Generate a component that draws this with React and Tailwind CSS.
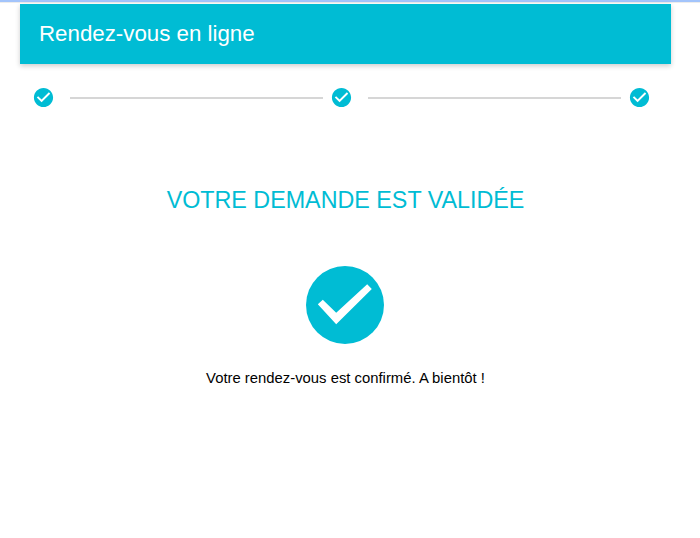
import React from 'react';

const StepIcon = () => (
  <svg viewBox="0 0 24 24" className="w-[23px] h-[23px] shrink-0 text-[#00bcd4]" fill="currentColor">
    <path d="M12 2C6.48 2 2 6.48 2 12s4.48 10 10 10 10-4.48 10-10S17.52 2 12 2zm-2 15l-5-5 1.41-1.41L10 14.17l7.59-7.59L19 8l-9 9z" />
  </svg>
);

const StepLine = () => <div className="flex-1 h-[2px] bg-[#d6d6d6] ml-[15px] mr-[7px]" />;

const App = () => {
  return (
    <div className="w-[700px] h-[538px] bg-white overflow-hidden font-['Liberation_Sans',Arial,sans-serif]">
      <div className="h-[2px] bg-[#a3c4fb]" />
      <div className="h-px bg-[#ececec]" />
      <div className="ml-[20px] mr-[29px] mt-[1px] h-[60px] bg-[#00bcd4] flex items-center pl-[19px] shadow-[0_2px_5px_rgba(0,0,0,0.2)]">
        <h1 className="text-white text-[22.3px] leading-none">Rendez-vous en ligne</h1>
      </div>

      <div className="flex items-center pl-[32px] pr-[49px] mt-[22px]">
        <StepIcon />
        <StepLine />
        <StepIcon />
        <StepLine />
        <StepIcon />
      </div>

      <div className="flex flex-col items-center pr-[9px]">
        <h2 className="mt-[77px] text-[#00bcd4] text-[23.3px] leading-[28px] uppercase">Votre demande est validée</h2>
        <div className="mt-[52px] mr-[1px] w-[78px] h-[78px]">
          <svg viewBox="0 0 78 78" className="w-full h-full">
            <circle cx="39" cy="39" r="39" fill="#00bcd4" />
            <polygon points="11.8,38.3 16.8,33.7 30.2,46.7 61.2,18.3 65.8,23 30.2,58.3" fill="#fff" />
          </svg>
        </div>
        <p className="mt-[26px] text-black text-[14.85px] leading-[16px]">Votre rendez-vous est confirmé. A bientôt !</p>
      </div>
    </div>
  );
};

export default App;
